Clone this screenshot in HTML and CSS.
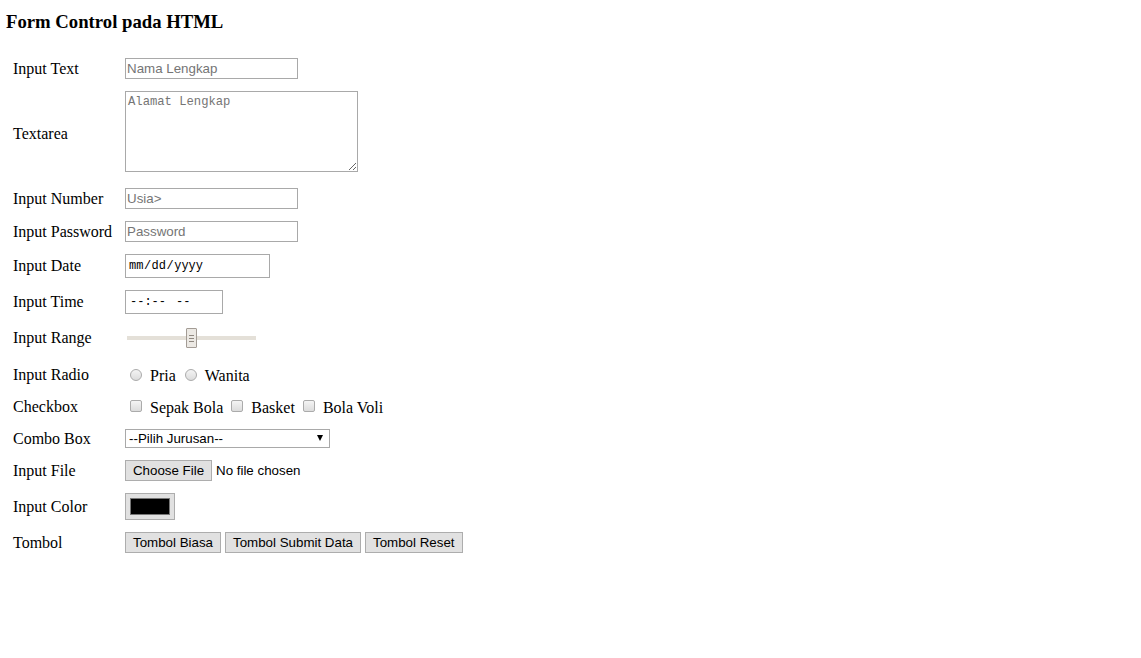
FILE: index.html
```html
<!DOCTYPE html>
<html lang="id">
<head>
<meta charset="utf-8">
<title>Form Control pada HTML</title>
<link rel="stylesheet" href="styles.css">
</head>
<body>
<div class="page">
  <h3 class="title">Form Control pada HTML</h3>
  <form class="form" onsubmit="return false">
    <label class="lbl">Input Text</label>
    <input class="ctl text-field" type="text" placeholder="Nama Lengkap">

    <label class="lbl">Textarea</label>
    <textarea class="ctl textarea" placeholder="Alamat Lengkap"></textarea>

    <label class="lbl">Input Number</label>
    <input class="ctl text-field num" type="number" placeholder="Usia&gt;">

    <label class="lbl">Input Password</label>
    <input class="ctl text-field" type="password" placeholder="Password">

    <label class="lbl">Input Date</label>
    <div class="ctl dt date"><span>mm</span><span class="sep">/</span><span>dd</span><span class="sep">/</span><span>yyyy</span></div>

    <label class="lbl">Input Time</label>
    <div class="ctl dt time"><span>--:--</span><span class="ampm">--</span></div>

    <label class="lbl">Input Range</label>
    <input class="range" type="range" min="0" max="100" value="50">

    <label class="lbl">Input Radio</label>
    <div class="choices">
      <input class="radio" type="radio" name="jk" id="pria"><label class="opt" for="pria">Pria</label>
      <input class="radio" type="radio" name="jk" id="wanita"><label class="opt" for="wanita">Wanita</label>
    </div>

    <label class="lbl">Checkbox</label>
    <div class="choices choices-check">
      <input class="check" type="checkbox" id="c1"><label class="opt" for="c1">Sepak Bola</label>
      <input class="check" type="checkbox" id="c2"><label class="opt" for="c2">Basket</label>
      <input class="check" type="checkbox" id="c3"><label class="opt" for="c3">Bola Voli</label>
    </div>

    <label class="lbl">Combo Box</label>
    <span class="select-wrap">
      <select class="ctl select">
        <option>--Pilih Jurusan--</option>
      </select>
    </span>

    <label class="lbl">Input File</label>
    <div class="file">
      <button class="btn file-btn" type="button">Choose File</button>
      <span class="file-name">No file chosen</span>
    </div>

    <label class="lbl">Input Color</label>
    <button class="btn color-btn" type="button"><span class="swatch"></span></button>

    <label class="lbl">Tombol</label>
    <div class="buttons">
      <button class="btn" type="button">Tombol Biasa</button>
      <button class="btn" type="submit">Tombol Submit Data</button>
      <button class="btn" type="reset">Tombol Reset</button>
    </div>
  </form>
</div>
</body>
</html>
```

FILE: styles.css
```css
html, body {
  margin: 0;
  background: #fff;
}

body {
  font-family: "Liberation Serif", "Times New Roman", serif;
  font-size: 16px;
  color: #000;
}

.page {
  padding: 11px 6px 0;
}

.title {
  margin: 0;
  font-size: 18.72px;
  font-weight: bold;
  line-height: 21px;
}

.form {
  display: grid;
  grid-template-columns: 100px auto;
  grid-template-rows: 33px 97px 33px 33px 36px 36px 36px 38px 26px 37px 27px 45px 27px;
  column-gap: 12px;
  align-items: center;
  justify-items: start;
  margin-top: 20px;
  padding-left: 7px;
}

.lbl {
  line-height: 18px;
  white-space: nowrap;
}

.ctl {
  box-sizing: border-box;
  margin: 0;
  border: 1px solid #a9a9a9;
  border-radius: 0;
  background: #fff;
  color: #000;
  font-family: "Liberation Sans", Arial, sans-serif;
  font-size: 13.33px;
  outline: none;
}

.ctl::placeholder {
  color: #757575;
  opacity: 1;
}

.text-field {
  width: 173px;
  height: 21px;
  padding: 0 1px;
}

.num {
  -moz-appearance: textfield;
}

.num::-webkit-inner-spin-button,
.num::-webkit-outer-spin-button {
  -webkit-appearance: none;
  margin: 0;
}

.textarea {
  display: block;
  width: 233px;
  height: 81px;
  margin-bottom: 4px;
  padding: 3px 2px 2px;
  font-family: "Liberation Mono", "Courier New", monospace;
  font-size: 12.2px;
  line-height: 15px;
}

.dt {
  display: flex;
  align-items: center;
  height: 24px;
  font-family: "Liberation Mono", "Courier New", monospace;
  font-size: 12px;
}

.date {
  width: 145px;
  padding: 0 3px;
}

.date .sep {
  margin: 0 0.5px;
}

.time {
  width: 98px;
  padding: 0 4px;
}

.time .ampm {
  margin-left: 10px;
}

.range {
  -webkit-appearance: none;
  appearance: none;
  width: 129px;
  height: 20px;
  margin: 0 0 0 2px;
  padding: 0;
  background: transparent;
}

.range::-webkit-slider-runnable-track {
  height: 4px;
  background: #e4e0d8;
  border: none;
}

.range::-webkit-slider-thumb {
  -webkit-appearance: none;
  box-sizing: border-box;
  width: 11px;
  height: 20px;
  margin-top: -8px;
  border: 1px solid #a39c95;
  border-radius: 1px;
  background:
    linear-gradient(#8f8880, #8f8880) 2px 6px / 5px 1px no-repeat,
    linear-gradient(#8f8880, #8f8880) 2px 9px / 5px 1px no-repeat,
    linear-gradient(#8f8880, #8f8880) 2px 12px / 5px 1px no-repeat,
    #ece9e4;
}

.choices {
  display: flex;
  align-items: center;
  line-height: 18px;
}

.opt {
  margin: 1px 4px 0 5px;
  white-space: nowrap;
}

.choices-check .opt {
  margin: 1px 3px 0 5px;
}

.radio,
.check {
  -webkit-appearance: none;
  appearance: none;
  box-sizing: border-box;
  width: 12px;
  height: 12px;
  margin: 0 3px 0 5px;
  border: 1px solid #ababab;
  background: linear-gradient(#f4f4f4, #dcdcdc);
}

.radio {
  border-radius: 50%;
}

.check {
  border-radius: 2px;
  margin-bottom: 2px;
}

.select-wrap {
  position: relative;
  display: block;
}

.select {
  -webkit-appearance: none;
  appearance: none;
  display: block;
  width: 205px;
  height: 19px;
  padding: 0 0 0 3px;
  line-height: 17px;
}

.select-wrap::after {
  content: "";
  position: absolute;
  right: 7px;
  top: 6px;
  border-left: 3.5px solid transparent;
  border-right: 3.5px solid transparent;
  border-top: 6px solid #000;
  pointer-events: none;
}

.btn {
  box-sizing: border-box;
  height: 21px;
  margin: 0;
  padding: 0 7px;
  border: 1px solid #adadad;
  border-radius: 0;
  background: #e1e1e1;
  color: #000;
  font-family: "Liberation Sans", Arial, sans-serif;
  font-size: 13.33px;
  line-height: 19px;
}

.file {
  display: flex;
  align-items: center;
  gap: 4px;
  font-family: "Liberation Sans", Arial, sans-serif;
  font-size: 13.33px;
}

.file-btn {
  width: 87px;
  padding: 0;
}

.color-btn {
  display: flex;
  width: 50px;
  height: 27px;
  padding: 4px;
}

.swatch {
  flex: 1;
  box-sizing: border-box;
  border: 1px solid #777;
  background: #000;
}

.buttons {
  display: flex;
  gap: 4px;
}
```
